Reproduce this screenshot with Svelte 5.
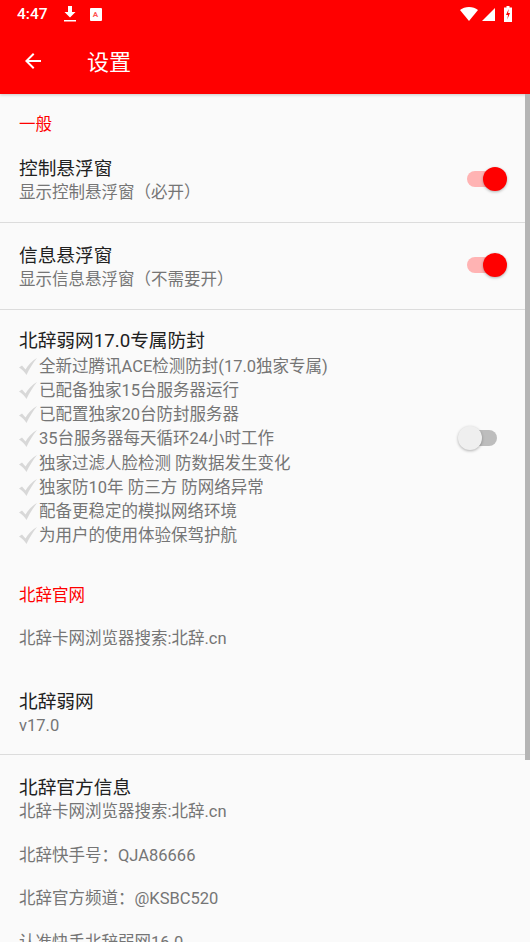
<script lang="ts">
  const features = [
    '全新过腾讯ACE检测防封(17.0独家专属)',
    '已配备独家15台服务器运行',
    '已配置独家20台防封服务器',
    '35台服务器每天循环24小时工作',
    '独家过滤人脸检测 防数据发生变化',
    '独家防10年 防三方 防网络异常',
    '配备更稳定的模拟网络环境',
    '为用户的使用体验保驾护航'
  ];
  const info = ['北辞卡网浏览器搜索:北辞.cn', '北辞快手号：QJA86666', '北辞官方频道：@KSBC520', '认准快手北辞弱网16.0'];
</script>

<div class="screen">
  <header class="appbar">
    <div class="status">
      <span class="time">4:47</span>
      <svg class="ic-dl" viewBox="0 0 12 16" width="12" height="16"><path d="M4 0h4v6h3.500L6 11.500.5 6H4zM0 14h12v1.600H0z" fill="#fff"/></svg>
      <span class="ic-a">A</span>
      <span class="grow"></span>
      <svg viewBox="0 0 18 14" width="18" height="14"><path d="M0 3C2.500 1 5.500 0 9 0s6.500 1 9 3L9 14z" fill="#fff"/></svg>
      <svg class="ic-sig" viewBox="0 0 13 13" width="13" height="13"><path d="M13 0v13H0z" fill="#fff"/></svg>
      <svg viewBox="0 0 8 16" width="8" height="16"><path d="M2.500 0h3v1.500H8V16H0V1.500h2.500z" fill="#fff"/><path d="M4.700 3 2 9h2l-.7 4.500L6 7H4.100z" fill="#f00"/></svg>
    </div>
    <div class="toolbar">
      <svg viewBox="0 0 24 24" width="24" height="24"><path d="M20 11H7.830l5.590-5.590L12 4l-8 8 8 8 1.410-1.410L7.830 13H20z" fill="#fff"/></svg>
      <span class="title">设置</span>
    </div>
  </header>

  <main class="list">
    <div class="cat first">一般</div>
    <div class="row control">
      <div class="text">
        <div class="name">控制悬浮窗</div>
        <div class="sub">显示控制悬浮窗（必开）</div>
      </div>
      <span class="switch on"><i></i></span>
    </div>
    <div class="row bordered floating">
      <div class="text">
        <div class="name">信息悬浮窗</div>
        <div class="sub">显示信息悬浮窗（不需要开）</div>
      </div>
      <span class="switch on"><i></i></span>
    </div>
    <div class="row bordered tall">
      <div class="text">
        <div class="name">北辞弱网17.0专属防封</div>
        {#each features as f}
          <div class="feat">
            <svg viewBox="0 0 20 20" width="20" height="20">
              <path d="M1 11.500 4 9.500l3.500 4C10.500 8.500 14 5 19 2 15 7 11.500 12.500 8.500 19 6.500 15.800 4 13.500 1 11.500z" fill="#d8d8d8"/>
            </svg>
            <span>{f}</span>
          </div>
        {/each}
      </div>
      <span class="switch"><i></i></span>
    </div>
    <div class="cat second">北辞官网</div>
    <div class="plain">北辞卡网浏览器搜索:北辞.cn</div>
    <div class="row version">
      <div class="text">
        <div class="name">北辞弱网</div>
        <div class="sub">v17.0</div>
      </div>
    </div>
    <div class="row bordered official">
      <div class="text">
        <div class="name">北辞官方信息</div>
        {#each info as line}
          <div class="sub para">{line}</div>
        {/each}
      </div>
    </div>
  </main>
  <div class="scrollbar"></div>
</div>

<style>
  :global(body) { margin: 0; background: #fafafa; }
  .screen { position: relative; width: 530px; height: 942px; overflow: hidden; background: #fafafa; font-family: Roboto, "Noto Sans CJK SC", sans-serif; }
  .appbar { height: 94px; background: #f00; color: #fff; box-shadow: 0 1px 3px rgba(0,0,0,0.2); position: relative; }
  .status { height: 28px; display: flex; align-items: center; padding: 0 18px 0 17px; }
  .time { font-size: 15.5px; font-weight: 500; margin-right: 16px; }
  .ic-dl { margin-right: 14px; }
  .ic-a { width: 12px; height: 13px; background: #fff; color: #f55; border-radius: 1px; font-size: 8px; font-weight: 700; line-height: 13px; text-align: center; }
  .grow { flex: 1; }
  .ic-sig { margin: 0 9px 0 4px; }
  .toolbar { height: 66px; display: flex; align-items: center; padding-left: 21px; }
  .title { font-size: 22px; margin: -2px 0 0 42px; }
  .list { display: flex; flex-direction: column; }
  .cat { color: #f00; font-size: 16.500px; line-height: 20px; padding-left: 19px; }
  .cat.first { padding-top: 21px; }
  .cat.second { padding-top: 26px; }
  .row { display: flex; align-items: center; padding: 0 33px 0 19px; box-sizing: border-box; }
  .control { height: 87px; padding-top: 4px; }
  .control .switch { margin-bottom: 4px; }
  .floating { height: 87px; padding-top: 4px; }
  .floating .switch { margin-bottom: 6px; }
  .bordered { border-top: 1px solid #dcdcdc; }
  .text { flex: 1; min-width: 0; }
  .name { font-size: 18.700px; line-height: 24px; color: #212121; }
  .sub { font-size: 16.500px; line-height: 24px; color: #757575; }
  .tall { padding-top: 19px; padding-bottom: 14px; }
  .feat { display: flex; align-items: center; height: 24.150px; font-size: 16.500px; color: #757575; white-space: nowrap; }
  .feat svg { margin: 2px 1px 0 -1px; flex: none; }
  .plain { font-size: 16.500px; line-height: 22px; color: #757575; padding: 22px 0 0 19px; }
  .version { height: 64px; margin-top: 40px; align-items: flex-start; }
  .official { padding-top: 21px; align-items: flex-start; }
  .para + .para { margin-top: 19.500px; }
  .switch { position: relative; width: 30px; height: 16px; background: #ffb3b3; border-radius: 8px; flex: none; }
  .switch i { position: absolute; top: -4px; right: -10px; width: 24px; height: 24px; border-radius: 50%; background: #f00; box-shadow: 0 1px 3px rgba(0,0,0,0.3); }
  .switch:not(.on) { background: #bdbdbd; }
  .switch:not(.on) i { left: -9px; right: auto; background: #efefef; }
  .scrollbar { position: absolute; top: 94px; right: 0; width: 5px; height: 666px; background: #b5b5b5; }
</style>
